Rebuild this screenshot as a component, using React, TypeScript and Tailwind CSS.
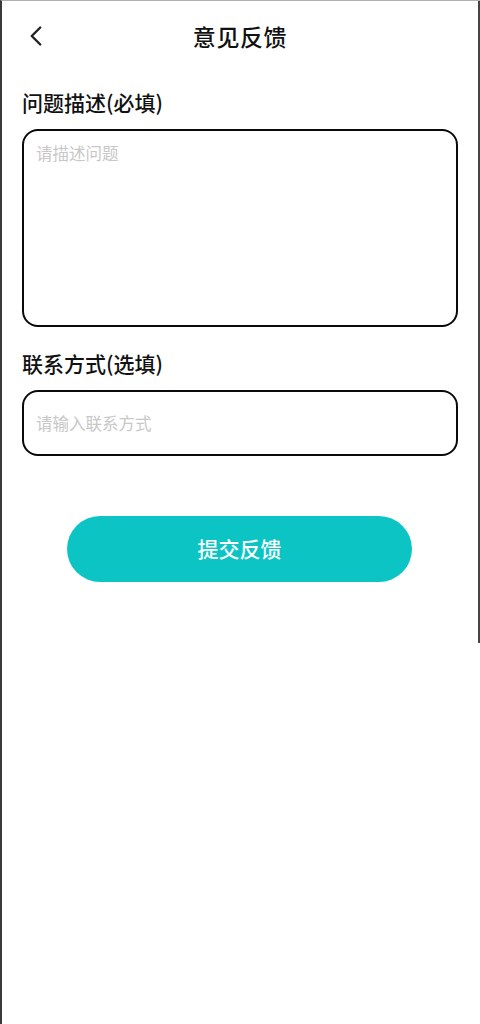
import { ChevronLeft } from "lucide-react"

const font = { fontFamily: '"Noto Sans CJK SC", "Noto Sans", sans-serif' }

export default function App() {
  return (
    <div
      className="flex h-[1024px] w-[480px] border-l-2 border-t border-l-[#3a3a3a] border-t-[#b0b0b0] bg-white text-[#111]"
      style={font}
    >
      <div className="flex flex-1 flex-col">
        {/* header */}
        <div className="relative flex h-[70px] items-center justify-center">
          <button className="absolute left-[17px] top-[18px] text-[#222]">
            <ChevronLeft size={34} strokeWidth={1.7} />
          </button>
          <h1 className="text-[23px] font-medium tracking-wide">意见反馈</h1>
        </div>

        <div className="flex flex-col px-[20px]">
          <label className="mt-[16px] text-[21px] font-medium leading-[30px]">问题描述(必填)</label>
          <textarea
            placeholder="请描述问题"
            className="mt-[12px] h-[198px] w-[436px] resize-none rounded-[16px] border-[2.5px] border-[#0a0a0a] px-[12px] py-[10px] text-[16.5px] outline-none placeholder:text-[#c8c8c8]"
          />

          <label className="mt-[21px] text-[21px] font-medium leading-[30px]">联系方式(选填)</label>
          <input
            placeholder="请输入联系方式"
            className="mt-[12px] h-[66px] w-[436px] rounded-[16px] border-[2.5px] border-[#0a0a0a] px-[12px] text-[16.5px] outline-none placeholder:text-[#c8c8c8]"
          />

          <div className="mt-[60px] flex">
            <button className="ml-[45px] h-[66px] w-[345px] rounded-full bg-[#0cc4c4] text-[21px] font-medium text-white">
              提交反馈
            </button>
          </div>
        </div>
      </div>

      {/* right edge */}
      <div className="flex w-[4px] flex-col">
        <div className="h-[642px] w-[4px] bg-[#444]" />
        <div className="ml-auto w-[2px] flex-1 bg-[#333]" />
      </div>
    </div>
  )
}
